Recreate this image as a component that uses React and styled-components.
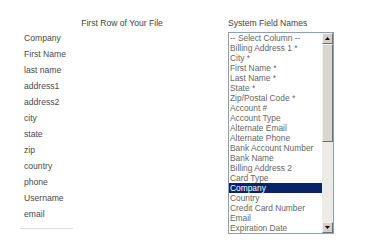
import React from 'react';
import styled, {createGlobalStyle} from 'styled-components';

const GlobalStyle = createGlobalStyle`
  html, body {
    margin: 0;
    padding: 0;
    background: #fff;
  }
  body {
    font-family: "Liberation Sans", Arial, sans-serif;
  }
`;

const Page = styled.div`
  width: 369px;
  height: 247px;
  overflow: hidden;
  padding: 17px 0 0 24px;
  box-sizing: border-box;
  display: grid;
  grid-template-columns: 196px 110px;
  grid-template-rows: 13px auto;
  column-gap: 8px;
`;

const Heading = styled.div`
  font-size: 8.6px;
  line-height: 13px;
  color: #444;
  text-align: ${props => props.center ? 'center' : 'left'};
  white-space: nowrap;
`;

const LabelList = styled.div`
  display: flex;
  flex-direction: column;
`;

const Label = styled.div`
  font-size: 8.6px;
  line-height: 16px;
  height: 16px;
  color: #4a4a4a;
  white-space: nowrap;
`;

const Rule = styled.div`
  margin: 6px 0 0 -4px;
  width: 53px;
  height: 1px;
  background: #dcdcdc;
`;

const ListBox = styled.div`
  margin-top: 2px;
  width: 106px;
  height: 202px;
  box-sizing: border-box;
  border: 1px solid #8d9fb6;
  display: flex;
  background: #fff;
`;

const Options = styled.div`
  flex: 1;
  overflow: hidden;
`;

const Option = styled.div`
  height: 10px;
  line-height: 10px;
  font-size: 8.4px;
  padding-left: 1px;
  white-space: nowrap;
  color: ${props => props.selected ? '#fff' : '#666'};
  background: ${props => props.selected ? '#0a246a' : 'transparent'};
`;

const ScrollBar = styled.div`
  width: 11px;
  display: flex;
  flex-direction: column;
  background: #ecebe6;
`;

const ArrowButton = styled.div`
  height: 11px;
  box-sizing: border-box;
  background: #d4d0c8;
  border-top: 1px solid #f4f3ee;
  border-left: 1px solid #f4f3ee;
  border-right: 1px solid #6f6f6f;
  border-bottom: 1px solid #6f6f6f;
  display: flex;
  align-items: center;
  justify-content: center;
`;

const Track = styled.div`
  flex: 1;
  display: flex;
  flex-direction: column;
`;

const Thumb = styled.div`
  height: 98px;
  box-sizing: border-box;
  background: #d9d6cf;
  border-top: 1px solid #f4f3ee;
  border-left: 1px solid #f4f3ee;
  border-right: 1px solid #6f6f6f;
  border-bottom: 1px solid #6f6f6f;
`;

const Arrow = ({down}) => (
  <svg width="5" height="3" viewBox="0 0 5 3">
    <polygon points={down ? '0,0 5,0 2.5,3' : '0,3 5,3 2.5,0'} fill="#000" />
  </svg>
);

const fileColumns = [
  'Company', 'First Name', 'last name', 'address1', 'address2', 'city',
  'state', 'zip', 'country', 'phone', 'Username', 'email'
];

const systemFields = [
  '-- Select Column --', 'Billing Address 1 *', 'City *', 'First Name *',
  'Last Name *', 'State *', 'Zip/Postal Code *', 'Account #', 'Account Type',
  'Alternate Email', 'Alternate Phone', 'Bank Account Number', 'Bank Name',
  'Billing Address 2', 'Card Type', 'Company', 'Country',
  'Credit Card Number', 'Email', 'Expiration Date'
];

export default function App() {
  return (
    <>
      <GlobalStyle />
      <Page>
        <Heading center>First Row of Your File</Heading>
        <Heading>System Field Names</Heading>
        <LabelList>
          {fileColumns.map(name => <Label key={name}>{name}</Label>)}
          <Rule />
        </LabelList>
        <div>
          <ListBox>
            <Options>
              {systemFields.map(field => (
                <Option key={field} selected={field === 'Company'}>{field}</Option>
              ))}
            </Options>
            <ScrollBar>
              <ArrowButton><Arrow /></ArrowButton>
              <Track><Thumb /></Track>
              <ArrowButton><Arrow down /></ArrowButton>
            </ScrollBar>
          </ListBox>
        </div>
      </Page>
    </>
  );
}
